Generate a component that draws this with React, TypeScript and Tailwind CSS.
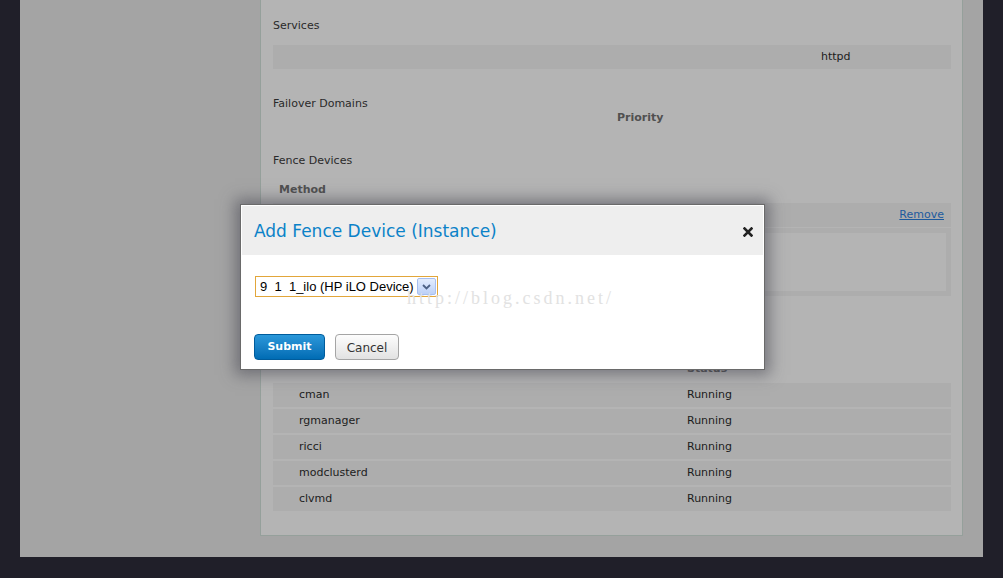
import React from "react";

const rows = ["cman", "rgmanager", "ricci", "modclusterd", "clvmd"];

export default function App() {
  return (
    <div
      className="relative w-[1003px] h-[578px] overflow-hidden bg-[#201f29]"
      style={{ fontFamily: '"DejaVu Sans", Verdana, sans-serif' }}
    >
      <div className="ml-[20px] w-[963px] h-[557px] bg-[#a4a4a4] pl-[240px]">
        <div className="w-[703px] h-[536px] bg-[#b4b4b4] border-x border-b border-[#95a09b] pl-[12px] pr-[11px] text-[11px] text-[#2a2a2a]">
          <div className="h-[45px] pt-[19px] leading-[14px]">Services</div>
          <div className="h-[24px] bg-[#adadad] flex items-center pt-[1px] pl-[548px] text-[#1c1c1c]">httpd</div>
          <div className="mt-[28px] leading-[14px]">Failover Domains</div>
          <div className="leading-[14px] pl-[344px] font-bold text-[#505050]">Priority</div>
          <div className="mt-[29px] leading-[14px]">Fence Devices</div>
          <div className="mt-[15px] leading-[14px] pl-[6px] font-bold text-[#505050]">Method</div>
          <div className="mt-[6px] h-[24px] bg-[#adadad] flex items-center justify-end pr-[7px]">
            <span className="text-[#1d5a9e] underline">Remove</span>
          </div>
          <div className="mt-[1px] h-[68px] border-[5px] border-[#adadad] bg-[#b4b4b4]"></div>
          <div className="mt-[66px] leading-[14px] pl-[414px] font-bold text-[#505050]">Status</div>
          <div className="mt-[7px] flex flex-col gap-[2px]">
            {rows.map((r) => (
              <div key={r} className="h-[24px] bg-[#adadad] flex items-center pt-[1px] text-[#1c1c1c]">
                <span className="w-[414px] pl-[26px]">{r}</span>
                <span>Running</span>
              </div>
            ))}
          </div>
        </div>
      </div>

      {/* Modal */}
      <div className="absolute left-[240px] top-[204px] w-[525px] h-[166px] border border-[#6a6a6a] bg-white p-[1px] shadow-[0_0_14px_5px_rgba(70,70,80,0.55)]">
        <div className="h-[49px] bg-[#eeeeee] flex items-center justify-between pl-[12px] pr-[10px] pt-[2px]">
          <span className="text-[17px] text-[#0b82c8] leading-none">Add Fence Device (Instance)</span>
          <svg width="10" height="10" viewBox="0 0 10 10">
            <path d="M1.5 1.5 L8.5 8.5 M8.5 1.5 L1.5 8.5" stroke="#222" strokeWidth="2.6" strokeLinecap="square" />
          </svg>
        </div>
        <div className="relative pl-[13px] pt-[21px]">
          <div
            className="w-[183px] h-[21px] border border-[#e2a63a] bg-white flex items-center justify-between pl-[4px] pr-[1px] text-[13px] text-black"
            style={{ fontFamily: '"Liberation Sans", Arial, sans-serif' }}
          >
            <span className="whitespace-pre">9  1  1_ilo (HP iLO Device)</span>
            <span className="w-[19px] h-[17px] rounded-[2px] border border-[#a7bff0] bg-gradient-to-b from-[#e4edfd] to-[#bcd0f7] flex items-center justify-center">
              <svg width="9" height="6" viewBox="0 0 9 6">
                <path d="M1 1 L4.5 4.5 L8 1" stroke="#4d6185" strokeWidth="1.8" fill="none" />
              </svg>
            </span>
          </div>
          <div
            className="absolute left-[165px] top-[33px] text-[18px] tracking-[3px] text-[#e2e2e2] leading-[20px]"
            style={{ fontFamily: '"Liberation Serif", "Times New Roman", serif' }}
          >
            http://blog.csdn.net/
          </div>
          <div className="mt-[37px] flex gap-[10px] -ml-[1px]">
            <button className="w-[71px] h-[26px] pt-[1px] rounded-[4px] border border-[#005c9c] bg-gradient-to-b from-[#2b98da] to-[#006cb4] text-white font-bold text-[11px]">
              Submit
            </button>
            <button className="w-[64px] h-[26px] pt-[1px] rounded-[4px] border border-[#a5a5a5] bg-gradient-to-b from-[#fdfdfd] to-[#e2e2e2] text-[#333] text-[12px]">
              Cancel
            </button>
          </div>
        </div>
      </div>
    </div>
  );
}
